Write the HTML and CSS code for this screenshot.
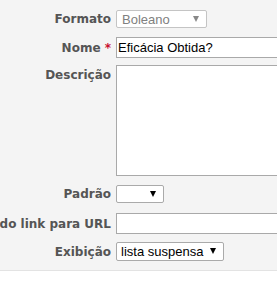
FILE: index.html
```html
<!DOCTYPE html>
<html lang="pt">
<head>
    <meta charset="UTF-8">
    <meta name="viewport" content="width=device-width, initial-scale=1.0">
    <title>Campo</title>
    <link rel="stylesheet" href="styles.css">
</head>
<body>
    <div class="form">
        <div class="row">
            <label class="label">Formato</label>
            <span class="select-wrap disabled">
                <select class="select select-format" disabled>
                    <option>Boleano</option>
                </select>
            </span>
        </div>

        <div class="row">
            <label class="label" for="nome">Nome&nbsp;<span class="req">*</span></label>
            <input class="input" type="text" id="nome" value="Eficácia Obtida?">
        </div>

        <div class="row row-text">
            <label class="label" for="descricao">Descrição</label>
            <textarea class="textarea" id="descricao"></textarea>
        </div>

        <div class="row">
            <label class="label" for="padrao">Padrão</label>
            <span class="select-wrap">
                <select class="select select-default" id="padrao">
                    <option></option>
                </select>
            </span>
        </div>

        <div class="row row-url">
            <label class="label" for="url">Texto do link para URL</label>
            <input class="input" type="text" id="url">
        </div>

        <div class="row row-last">
            <label class="label" for="exibicao">Exibição</label>
            <span class="select-wrap">
                <select class="select select-display" id="exibicao">
                    <option>lista suspensa</option>
                </select>
            </span>
        </div>
    </div>
</body>
</html>
```
FILE: styles.css
```css
html, body {
    margin: 0;
    background-color: #fff;
    overflow: hidden;
}

.form {
    background-color: #f4f4f4;
    padding: 10px 0 9px;
    border-bottom: 1px solid #e3e3e3;
    overflow: hidden;
}

.row {
    display: flex;
    align-items: center;
    gap: 5px;
}

.row + .row {
    margin-top: 9px;
}

.row.row-text {
    align-items: flex-start;
    margin-top: 7px;
    margin-bottom: 3px;
}

.row.row-url {
    margin-top: 10px;
}

.row.row-last {
    margin-top: 8px;
}

.label {
    flex: 0 0 111px;
    min-width: 0;
    display: flex;
    justify-content: flex-end;
    white-space: nowrap;
    font-family: "DejaVu Sans", Verdana, sans-serif;
    font-weight: bold;
    font-size: 12px;
    color: #555;
}

.row-text .label {
    padding-top: 3px;
}

.req {
    color: #c8102e;
}

.input,
.textarea,
.select {
    font-family: "Liberation Sans", Arial, sans-serif;
    font-size: 13px;
    color: #000;
    background-color: #fff;
    border: 1px solid #a9a9a9;
    box-sizing: border-box;
    margin: 0;
    border-radius: 0;
    outline: none;
}

.input {
    flex: 0 0 200px;
    height: 21px;
    padding: 0 1px;
}

.textarea {
    flex: 0 0 200px;
    height: 111px;
    resize: none;
}

.select-wrap {
    position: relative;
    display: inline-block;
}

.select {
    appearance: none;
    -webkit-appearance: none;
    height: 18px;
    padding: 0 16px 0 4px;
    border-color: #aaa;
    border-radius: 2px;
    display: block;
}

.select-wrap::after {
    content: "";
    position: absolute;
    right: 8px;
    top: 6px;
    border-left: 3px solid transparent;
    border-right: 3px solid transparent;
    border-top: 6px solid #000;
}

.select-wrap.disabled::after {
    border-top-color: #888;
}

.select:disabled {
    color: #808080;
    opacity: 1;
    background-color: #fff;
    border-color: #c4c4c4;
}

.select-format {
    width: 91px;
    padding-left: 5px;
}

.select-default {
    width: 48px;
}

.select-display {
    width: 108px;
    height: 19px;
}
```
